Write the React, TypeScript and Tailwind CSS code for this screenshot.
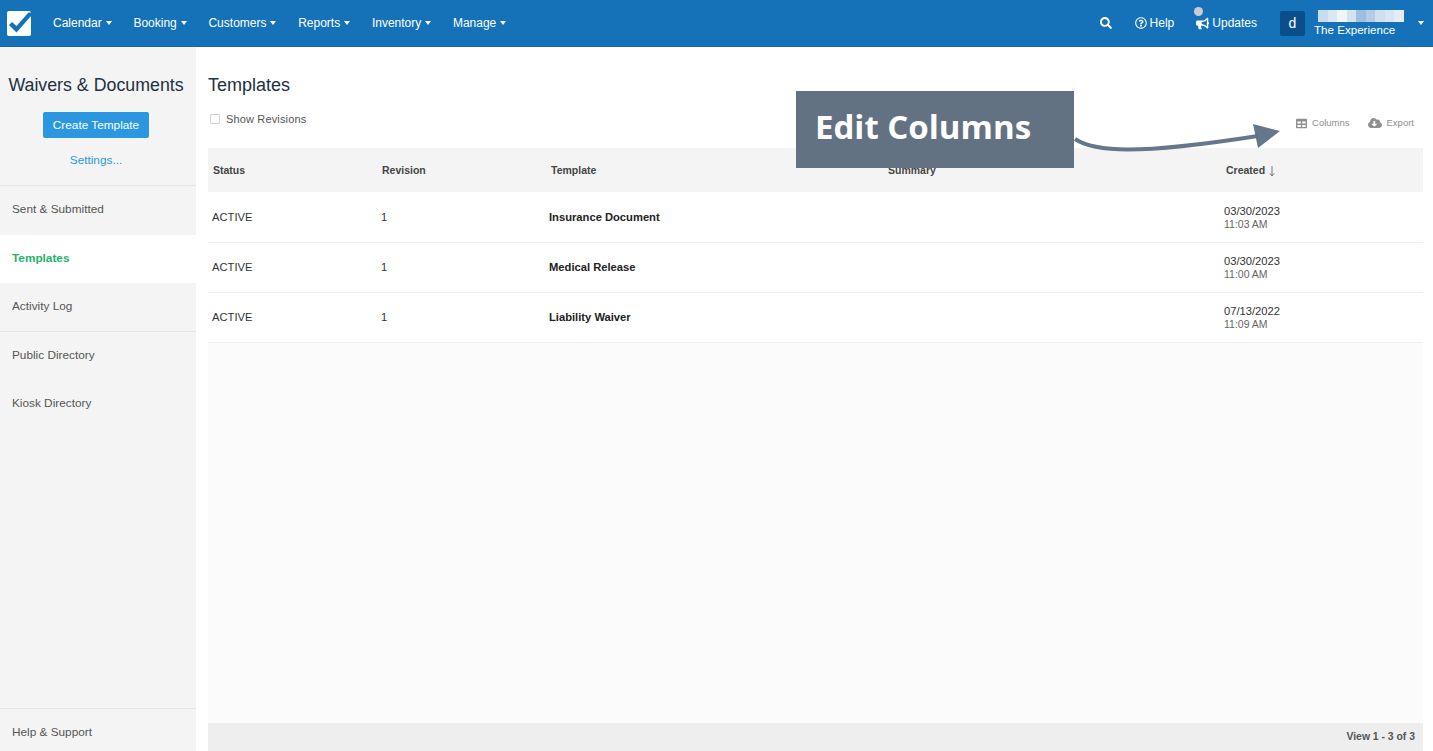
import { FaBullhorn, FaCloudDownloadAlt, FaRegQuestionCircle, FaSearch, FaTable } from 'react-icons/fa';

const navItems = ['Calendar', 'Booking', 'Customers', 'Reports', 'Inventory', 'Manage'];

const rows = [
  { name: 'Insurance Document', date: '03/30/2023', time: '11:03 AM' },
  { name: 'Medical Release', date: '03/30/2023', time: '11:00 AM' },
  { name: 'Liability Waiver', date: '07/13/2022', time: '11:09 AM' },
];

const blurBlocks = [
  'bg-[#c9dcee]', 'bg-[#dbe7f3]', 'bg-[#f0f5fa]', 'bg-[#d5e3f0]', 'bg-[#9dbfdd]',
  'bg-[#b4cde5]', 'bg-[#cfdfee]', 'bg-[#d9e5f1]', 'bg-[#e4edf5]',
];

function Caret({ className = 'border-t-white' }: { className?: string }) {
  return <span className={`inline-block h-0 w-0 border-x-[3.5px] border-t-[4px] border-x-transparent ${className}`} />;
}

function Logo() {
  return (
    <svg viewBox="0 0 24 25" className="h-[25px] w-[24px]">
      <rect x="0" y="0" width="24" height="25" rx="2" fill="#ffffff" />
      <path d="M2 14 L5 11 L9.5 15 L21.5 1.5 L24 1.5 L24 5 L9.5 21.5 Z" fill="#1572b8" />
    </svg>
  );
}

function Header() {
  return (
    <header className="flex h-[47px] shrink-0 items-center border-b border-[#1268a9] bg-[#1572b8] pl-[7px] text-[12px] text-white">
      <Logo />
      <nav className="ml-[22px] flex items-center gap-[21.7px]">
        {navItems.map((item) => (
          <div key={item} className="flex items-center gap-[4px]">
            <span>{item}</span>
            <Caret />
          </div>
        ))}
      </nav>
      <div className="ml-auto flex items-center">
        <FaSearch className="h-[12px] w-[12px]" />
        <div className="ml-[23px] flex items-center gap-[3px]">
          <FaRegQuestionCircle className="h-[12px] w-[12px]" />
          <span>Help</span>
        </div>
        <div className="relative ml-[22px] flex items-center gap-[3px]">
          <span className="absolute left-[-2px] top-[-7px] h-[9px] w-[9px] rounded-full bg-[#c9ccd1]" />
          <FaBullhorn className="h-[13px] w-[13px]" />
          <span>Updates</span>
        </div>
        <div className="ml-[23px] flex h-[25px] w-[25px] items-center justify-center rounded-[2px] bg-[#0b4f8a] text-[14px]">
          d
        </div>
        <div className="ml-[9px] flex w-[102px] flex-col">
          <div className="ml-[4px] flex h-[12px]">
            {blurBlocks.map((color, i) => (
              <span key={i} className={`h-full w-[9.5px] ${color}`} />
            ))}
          </div>
          <span className="mt-[1px] text-[11.6px] leading-[14px]">The Experience</span>
        </div>
        <Caret className="mr-[9px] ml-[2px] border-t-white" />
      </div>
    </header>
  );
}

function SideLink({ label, active, border }: { label: string; active?: boolean; border?: boolean }) {
  return (
    <div
      className={`flex h-[48.5px] items-center pl-[12px] text-[11.8px] ${
        active ? 'bg-white font-bold text-[#1fb36b]' : 'text-[#555555]'
      } ${border ? 'border-b border-[#e6e6e6]' : ''}`}
    >
      {label}
    </div>
  );
}

function Sidebar() {
  return (
    <aside className="flex w-[196px] shrink-0 flex-col bg-[#f4f4f4]">
      <div className="flex h-[139px] flex-col items-center border-b border-[#e6e6e6] pr-[4px] pt-[27px]">
        <h1 className="whitespace-nowrap text-[17.8px] leading-[22px] text-[#22303f]">Waivers &amp; Documents</h1>
        <button className="mt-[16px] h-[26px] w-[106px] rounded-[2px] bg-[#2c97e1] pt-[1px] text-[11.8px] text-white">
          Create Template
        </button>
        <a className="mt-[14px] text-[11.8px] leading-[16px] text-[#2c97e1]">Settings...</a>
      </div>
      <SideLink label="Sent & Submitted" />
      <SideLink label="Templates" active />
      <SideLink label="Activity Log" border />
      <SideLink label="Public Directory" />
      <SideLink label="Kiosk Directory" />
      <div className="mt-auto flex h-[43px] items-center border-t border-[#e6e6e6] pl-[12px] pt-[6px] text-[11.8px] text-[#555555]">
        Help &amp; Support
      </div>
    </aside>
  );
}

function SortArrow() {
  return (
    <svg viewBox="0 0 6 11" className="h-[11px] w-[6px]" fill="none" stroke="#777777" strokeWidth="1">
      <path d="M3 0 V10 M1 7.5 L3 10 L5 7.5" />
    </svg>
  );
}

function Table() {
  return (
    <div className="flex min-h-0 flex-1 flex-col bg-[#fbfbfb]">
      <div className="grid h-[44px] shrink-0 grid-cols-[169px_169px_337px_338px_1fr] items-center bg-[#f4f4f4] pl-[5px] pt-[2px] text-[10.5px] font-bold text-[#444444]">
        <span>Status</span>
        <span>Revision</span>
        <span>Template</span>
        <span>Summary</span>
        <span className="flex items-center gap-[4px]">
          Created <SortArrow />
        </span>
      </div>
      <div className="shrink-0 bg-white pt-[1px]">
        {rows.map((row) => (
          <div
            key={row.name}
            className="grid h-[50px] grid-cols-[169px_168px_337px_338px_1fr] items-center border-b border-[#efefef] pl-[4px] text-[11.2px] text-[#333333]"
          >
            <span>ACTIVE</span>
            <span>1</span>
            <span className="font-bold text-[#222222]">{row.name}</span>
            <span />
            <div className="flex flex-col">
              <span className="leading-[13px]">{row.date}</span>
              <span className="text-[10.5px] leading-[13px] text-[#666666]">{row.time}</span>
            </div>
          </div>
        ))}
      </div>
      <div className="mt-auto flex h-[28px] shrink-0 items-center justify-end bg-[#eeeeee] pr-[8px] text-[10.4px] font-bold text-[#555555]">
        View 1 - 3 of 3
      </div>
    </div>
  );
}

function Callout() {
  return (
    <>
      <div className="absolute left-[796px] top-[91px] flex h-[77px] w-[278px] items-center bg-[#637282] pb-[6px] pl-[19px] font-['Open_Sans',sans-serif] text-[33px] font-bold text-white">
        Edit Columns
      </div>
      <svg className="absolute left-[1074px] top-[122px]" width="210" height="36" viewBox="0 0 210 36">
        <path d="M1 17 C 20 30, 62 33, 184 14" fill="none" stroke="#5c7086" strokeWidth="4" opacity="0.95" />
        <path d="M179 2 L206 9 L184 26 Z" fill="#5c7086" opacity="0.95" />
      </svg>
    </>
  );
}

export default function App() {
  return (
    <div className="relative flex h-[751px] w-[1433px] flex-col overflow-hidden bg-white font-['Liberation_Sans',sans-serif]">
      <Header />
      <div className="flex min-h-0 flex-1">
        <Sidebar />
        <main className="flex min-w-0 flex-1 flex-col pl-[12px] pr-[10px]">
          <h2 className="mt-[27px] text-[18px] leading-[22px] text-[#22303f]">Templates</h2>
          <div className="mt-[16px] flex h-[14px] items-center">
            <span className="ml-[2px] h-[10px] w-[10px] rounded-[1px] border border-[#cfcfdc] bg-white" />
            <span className="ml-[6px] text-[11px] tracking-[0.15px] text-[#555555]">Show Revisions</span>
            <div className="ml-auto mt-[8px] flex items-center text-[9.5px] text-[#8f8f8f]">
              <FaTable className="h-[11px] w-[11px]" />
              <span className="ml-[5px]">Columns</span>
              <FaCloudDownloadAlt className="ml-[18px] h-[14px] w-[14px]" />
              <span className="ml-[5px] mr-[9px]">Export</span>
            </div>
          </div>
          <div className="mt-[22px] flex min-h-0 flex-1">
            <Table />
          </div>
        </main>
      </div>
      <Callout />
    </div>
  );
}
